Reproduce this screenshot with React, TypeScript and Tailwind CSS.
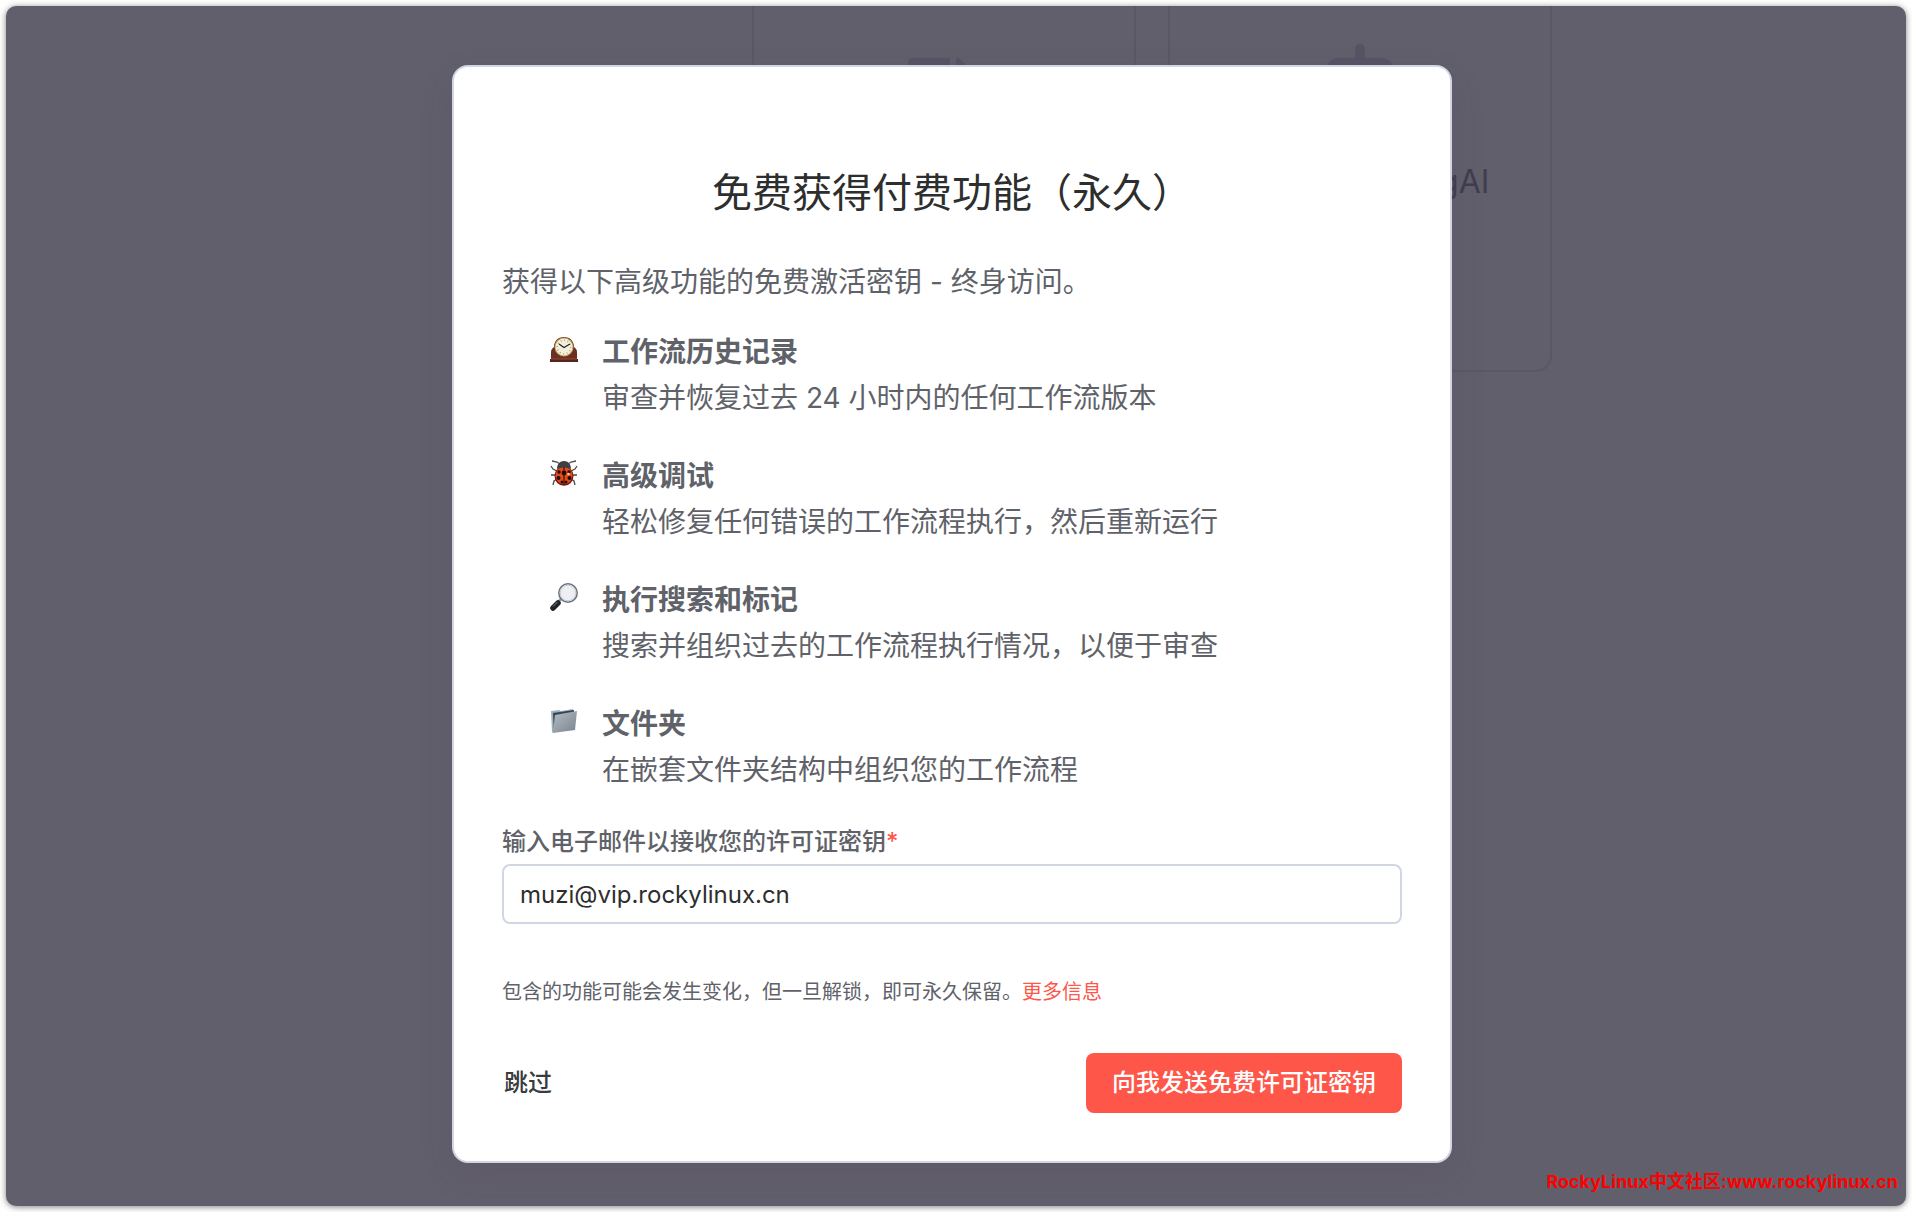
import { useState } from "react";
import { FaFile, FaRobot } from "react-icons/fa";

const features = [
  { icon: <ClockIcon />, title: "工作流历史记录", text: "审查并恢复过去 24 小时内的任何工作流版本" },
  { icon: <BugIcon />, title: "高级调试", text: "轻松修复任何错误的工作流程执行，然后重新运行" },
  { icon: <SearchIcon />, title: "执行搜索和标记", text: "搜索并组织过去的工作流程执行情况，以便于审查" },
  { icon: <FolderIcon />, title: "文件夹", text: "在嵌套文件夹结构中组织您的工作流程" }
];

export default function App() {
  const [email, setEmail] = useState("muzi@vip.rockylinux.cn");

  return (
    <div className="min-h-screen bg-white p-1.5 font-['Inter','Noto_Sans_CJK_SC',sans-serif]">
      <div className="relative flex min-h-[1200px] justify-center overflow-hidden rounded-[10px] bg-[#615f6c] pt-[59px] pr-2 pb-[43px] shadow-[0_1px_6px_rgba(0,0,0,0.5)]">
        <Backdrop />

        <main
          role="dialog"
          aria-labelledby="title"
          className="relative w-full max-w-[1000px] rounded-2xl border-2 border-[#d0d6e4] bg-white px-12 pt-24 pb-12 text-[#606269] shadow-[0_12px_32px_rgba(90,60,80,0.15)]"
        >
          <h1 id="title" className="text-center text-[40px] leading-[60px] text-[#2d2e2e]">
            免费获得付费功能（永久）
          </h1>
          <p className="mt-9 text-[28px] leading-[46px]">获得以下高级功能的免费激活密钥 - 终身访问。</p>

          <ul className="mt-6 flex flex-col gap-8">
            {features.map((feature) => (
              <li key={feature.title} className="flex gap-6 pl-12 text-[28px] leading-[46px]">
                <span className="flex h-10 w-7 shrink-0 items-center">{feature.icon}</span>
                <div>
                  <h2 className="font-bold">{feature.title}</h2>
                  <p>{feature.text}</p>
                </div>
              </li>
            ))}
          </ul>

          <form onSubmit={(event) => event.preventDefault()}>
            <label htmlFor="email" className="mt-[31px] block text-2xl leading-9 font-medium">
              输入电子邮件以接收您的许可证密钥<span className="text-[#ff564a]">*</span>
            </label>
            <input
              id="email"
              type="email"
              value={email}
              onChange={(event) => setEmail(event.target.value)}
              className="mt-1 h-[60px] w-full rounded-lg border-2 border-[#d0d6e4] bg-white px-4 text-2xl text-[#2d2e2e] outline-none"
            />

            <p className="mt-[52px] text-xl leading-8">
              包含的功能可能会发生变化，但一旦解锁，即可永久保留。
              <a href="#more" className="text-[#ff564a]">更多信息</a>
            </p>

            <div className="mt-[45px] flex items-center justify-between text-2xl font-medium">
              <button type="button" className="h-[60px] px-0.5 text-[#3a3b3c]">跳过</button>
              <button type="submit" className="h-[60px] rounded-lg bg-[#ff564a] px-[26px] text-white">
                向我发送免费许可证密钥
              </button>
            </div>
          </form>
        </main>

        <div className="absolute right-2 bottom-2.5 text-lg leading-7 font-bold text-[#ff0000]">
          RockyLinux中文社区:www.rockylinux.cn
        </div>
      </div>
    </div>
  );
}

/* dimmed start cards of the canvas below the dialog */
function Backdrop() {
  return (
    <div className="absolute inset-x-0 top-0 flex justify-center gap-8 pl-[392px] text-[#555465]">
      <div className="flex h-[366px] w-96 justify-center rounded-b-2xl border-2 border-t-0 border-[#5a5866] pt-[52px]">
        <FaFile size={96} />
      </div>
      <div className="flex h-[366px] w-96 flex-col items-center rounded-b-2xl border-2 border-t-0 border-[#5a5866] pt-7">
        <FaRobot size={96} />
        <span className="mt-8 text-[32px] leading-10 whitespace-nowrap text-[#403d4e]">Start with LangAI</span>
      </div>
    </div>
  );
}

function ClockIcon() {
  return (
    <svg viewBox="0 0 28 28" className="h-7 w-7" aria-hidden="true">
      <path d="M1 25v-8c0-3 2-4 3-5 0-6 4-10 10-10s10 4 10 10c1 1 3 2 3 5v8z" fill="#6b3024" />
      <path d="M0 24h28v3H0z" fill="#56241b" />
      <path d="M1 24h26" stroke="#8d4a38" />
      <circle cx="14" cy="12" r="9.5" fill="#c3a14e" />
      <circle cx="14" cy="12" r="8.5" fill="#f4efdc" />
      <circle cx="14" cy="12" r="6.8" fill="none" stroke="#8e8a7d" strokeWidth="1.6" strokeDasharray="0.7 2.86" />
      <path d="M9 9l5 3.5L20 9" fill="none" stroke="#222" strokeWidth="1.2" />
    </svg>
  );
}

function BugIcon() {
  return (
    <svg viewBox="0 0 28 28" className="h-7 w-7" aria-hidden="true">
      <path
        d="M10 5L7 3 2 2M18 5l3-2 5-1M7 12L3 10 1 7M21 12l4-2 2-3M6 16H1M22 16h5M7 20l-3 2-1 4M21 20l3 2 1 4"
        fill="none"
        stroke="#4c4c4c"
        strokeWidth="1.3"
      />
      <ellipse cx="14" cy="17" rx="9.5" ry="9.8" fill="#7c1408" />
      <ellipse cx="14" cy="16.5" rx="8.5" ry="8.8" fill="#e04a1c" />
      <path d="M7 10c0-5 3-8 7-8s7 3 7 8c-4-2-10-2-14 0z" fill="#3d4044" />
      <path d="M14 8v18" stroke="#250b08" />
      <g fill="#250b08">
        <circle cx="14" cy="14" r="2.4" />
        <circle cx="9" cy="13" r="1.7" />
        <circle cx="19" cy="13" r="1.7" />
        <circle cx="8.5" cy="19" r="2" />
        <circle cx="19.5" cy="19" r="2" />
        <circle cx="12" cy="23" r="1.5" />
        <circle cx="16" cy="23" r="1.5" />
      </g>
      <circle cx="18.5" cy="15" r="1.3" fill="#f7d8b0" />
    </svg>
  );
}

function SearchIcon() {
  return (
    <svg viewBox="0 0 28 28" className="h-7 w-7" aria-hidden="true">
      <path d="M8 19l3-3" stroke="#9a9da3" strokeWidth="2.5" />
      <path d="M3 25L8 20" stroke="#1f2226" strokeWidth="5.5" strokeLinecap="round" />
      <path d="M3 23.5L7.5 19" stroke="#7b7f85" strokeWidth="1" />
      <circle cx="18" cy="10" r="9.2" fill="#eeeff3" stroke="#697182" strokeWidth="1.5" />
      <circle cx="18" cy="10" r="7.8" fill="none" stroke="#c8cbd2" />
    </svg>
  );
}

function FolderIcon() {
  return (
    <svg viewBox="0 0 28 28" className="h-7 w-7" aria-hidden="true">
      <defs>
        <linearGradient id="folder" x1="0" y1="0" x2="1" y2="1">
          <stop offset="0" stopColor="#b4bcc4" />
          <stop offset="1" stopColor="#7a838d" />
        </linearGradient>
      </defs>
      <path d="M1 4l8-1 2 1 12-2v4L3 26l-1-1z" fill="#9eb0bc" />
      <path d="M3 6l21-3v4L4 24z" fill="#364651" />
      <path d="M5 8l22-4-2 19L3 26z" fill="url(#folder)" />
    </svg>
  );
}
